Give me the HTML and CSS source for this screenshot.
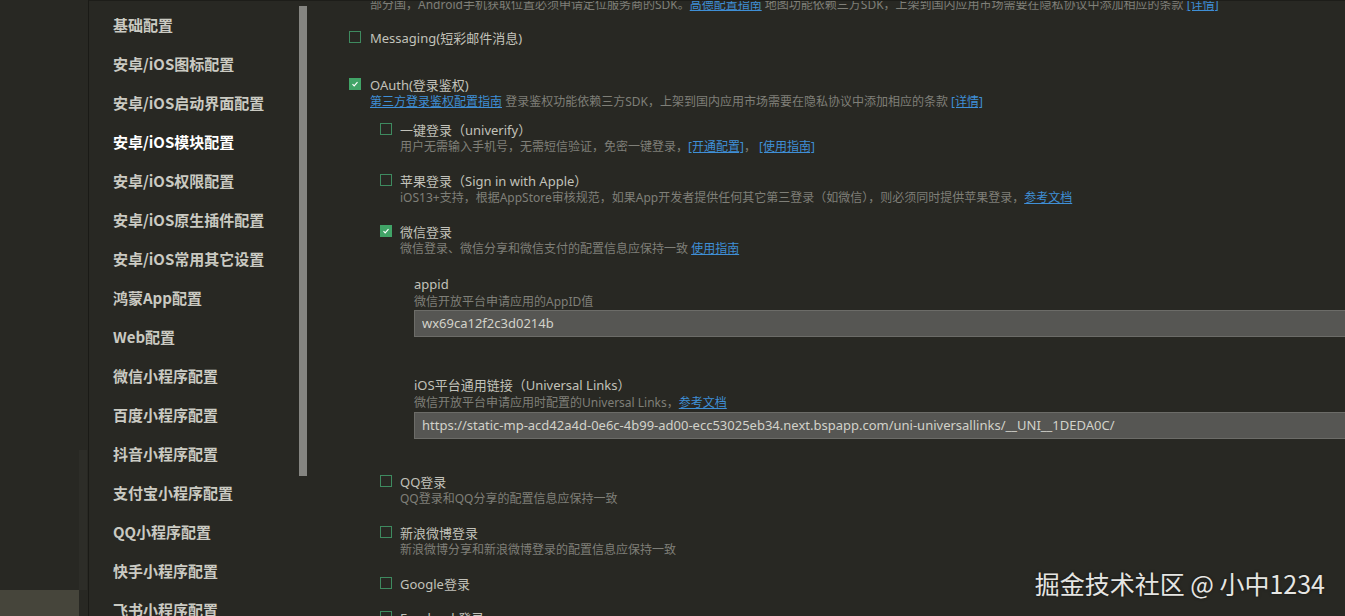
FILE: index.html
```html
<!DOCTYPE html>
<html lang="zh-CN">
<head>
    <meta charset="UTF-8">
    <meta name="viewport" content="width=device-width, initial-scale=1.0">
    <title>manifest.json</title>
    <link rel="stylesheet" href="styles.css">
</head>
<body>
    <div class="app">
        <div class="gutter">
            <div class="gutter-space"></div>
            <div class="gutter-rail"></div>
            <div class="gutter-block"></div>
        </div>

        <div class="sidebar">
            <div class="nav">
                <div class="nav-item">基础配置</div>
                <div class="nav-item">安卓/iOS图标配置</div>
                <div class="nav-item">安卓/iOS启动界面配置</div>
                <div class="nav-item active">安卓/iOS模块配置</div>
                <div class="nav-item">安卓/iOS权限配置</div>
                <div class="nav-item">安卓/iOS原生插件配置</div>
                <div class="nav-item">安卓/iOS常用其它设置</div>
                <div class="nav-item">鸿蒙App配置</div>
                <div class="nav-item">Web配置</div>
                <div class="nav-item">微信小程序配置</div>
                <div class="nav-item">百度小程序配置</div>
                <div class="nav-item">抖音小程序配置</div>
                <div class="nav-item">支付宝小程序配置</div>
                <div class="nav-item">QQ小程序配置</div>
                <div class="nav-item">快手小程序配置</div>
                <div class="nav-item">飞书小程序配置</div>
            </div>
            <div class="scrollbar">
                <div class="thumb"></div>
            </div>
        </div>

        <div class="content">
            <div class="desc lead">部分国，Android手机获取位置必须申请定位服务商的SDK。<a href="#">高德配置指南</a> 地图功能依赖三方SDK，上架到国内应用市场需要在隐私协议中添加相应的条款 <a href="#">[详情]</a></div>

            <div class="opt messaging">
                <div class="opt-label"><span class="check"></span>Messaging(短彩邮件消息)</div>
            </div>

            <div class="opt">
                <div class="opt-label"><span class="check on"><svg viewBox="0 0 12 12"><path d="M3 6.2l2 2 4-4.4"/></svg></span>OAuth(登录鉴权)</div>
                <div class="desc"><a href="#">第三方登录鉴权配置指南</a> 登录鉴权功能依赖三方SDK，上架到国内应用市场需要在隐私协议中添加相应的条款 <a href="#">[详情]</a></div>

                <div class="sub-list">
                    <div class="opt sub">
                        <div class="opt-label"><span class="check"></span>一键登录（univerify）</div>
                        <div class="desc">用户无需输入手机号，无需短信验证，免密一键登录，<a href="#">[开通配置]</a>， <a href="#">[使用指南]</a></div>
                    </div>

                    <div class="opt sub">
                        <div class="opt-label"><span class="check"></span>苹果登录（Sign in with Apple）</div>
                        <div class="desc">iOS13+支持，根据AppStore审核规范，如果App开发者提供任何其它第三登录（如微信），则必须同时提供苹果登录，<a href="#">参考文档</a></div>
                    </div>

                    <div class="opt sub">
                        <div class="opt-label"><span class="check on"><svg viewBox="0 0 12 12"><path d="M3 6.2l2 2 4-4.4"/></svg></span>微信登录</div>
                        <div class="desc">微信登录、微信分享和微信支付的配置信息应保持一致 <a href="#">使用指南</a></div>

                        <div class="fields">
                            <div class="field">
                                <div class="field-label">appid</div>
                                <div class="desc">微信开放平台申请应用的AppID值</div>
                                <input class="field-input" type="text" value="wx69ca12f2c3d0214b">
                            </div>
                            <div class="field">
                                <div class="field-label">iOS平台通用链接（Universal Links）</div>
                                <div class="desc">微信开放平台申请应用时配置的Universal Links，<a href="#">参考文档</a></div>
                                <input class="field-input" type="text" value="https://static-mp-acd42a4d-0e6c-4b99-ad00-ecc53025eb34.next.bspapp.com/uni-universallinks/__UNI__1DEDA0C/">
                            </div>
                        </div>
                    </div>

                    <div class="opt sub">
                        <div class="opt-label"><span class="check"></span>QQ登录</div>
                        <div class="desc">QQ登录和QQ分享的配置信息应保持一致</div>
                    </div>

                    <div class="opt sub">
                        <div class="opt-label"><span class="check"></span>新浪微博登录</div>
                        <div class="desc">新浪微博分享和新浪微博登录的配置信息应保持一致</div>
                    </div>

                    <div class="opt sub">
                        <div class="opt-label"><span class="check"></span>Google登录</div>
                    </div>

                    <div class="opt sub">
                        <div class="opt-label"><span class="check"></span>Facebook登录</div>
                    </div>
                </div>
            </div>
        </div>
    </div>

    <div class="watermark">掘金技术社区 @ 小中1234</div>
</body>
</html>
```

FILE: styles.css
```css
* {
    box-sizing: border-box;
}

body {
    margin: 0;
    padding: 0;
    height: 100vh;
    overflow: hidden;
    background-color: #282823;
    color: #c2c2ba;
    font-family: 'Noto Sans', 'Noto Sans CJK SC', sans-serif;
}

.app {
    display: flex;
    height: 100vh;
}

/* left strip */
.gutter {
    width: 88px;
    flex-shrink: 0;
    display: flex;
    flex-direction: column;
}

.gutter-space {
    flex: 1;
}

.gutter-rail {
    width: 8px;
    height: 140px;
    margin-left: 79px;
    background: #2d2d28;
}

.gutter-block {
    width: 79px;
    height: 26px;
    background: #46453b;
}

/* settings nav */
.sidebar {
    width: 219px;
    flex-shrink: 0;
    display: flex;
    border-left: 1px solid #1a1a16;
    border-top: 1px solid #1d1d19;
}

.nav {
    flex: 1;
    padding: 4px 0 0 24px;
}

.nav-item {
    height: 39px;
    line-height: 39px;
    font-family: 'Noto Sans CJK SC', sans-serif;
    font-size: 15px;
    font-weight: bold;
    color: #cacac2;
    white-space: nowrap;
}

.nav-item.active {
    color: #ffffff;
}

.scrollbar {
    width: 8px;
    padding-top: 5px;
}

.thumb {
    height: 470px;
    background: #858581;
}

/* main panel */
.content {
    flex: 1;
    min-width: 0;
    overflow: hidden;
    padding-left: 42px;
    border-top: 1px solid #1d1d19;
}

.desc {
    font-size: 12px;
    line-height: 17px;
    color: #7f7f78;
    white-space: nowrap;
}

.desc a {
    color: #3f8fd6;
    text-decoration: underline;
}

.lead {
    margin-top: -5px;
    padding-left: 21px;
}

.opt {
    margin-top: 17px;
}

.messaging {
    margin-top: 15.5px;
    margin-bottom: 30px;
}

.messaging + .opt {
    margin-top: 0;
}

.opt-label {
    display: flex;
    align-items: center;
    height: 17px;
    font-size: 13px;
    white-space: nowrap;
}

.check {
    width: 12px;
    height: 12px;
    margin-right: 9px;
    flex-shrink: 0;
    border: 1px solid #3e8a5f;
}

.check.on {
    background: #41a467;
    border-color: #41a467;
}

.check svg {
    display: block;
    width: 10px;
    height: 10px;
    fill: none;
    stroke: #ffffff;
    stroke-width: 1.4;
}

.opt > .desc {
    padding-left: 21px;
}

.sub-list {
    margin-top: 11px;
    margin-left: 31px;
}

.sub-list .opt:first-child {
    margin-top: 0;
}

.sub .check {
    margin-right: 8px;
}

.sub > .desc {
    padding-left: 20px;
}

/* wechat fields */
.fields {
    padding-left: 34px;
    padding-top: 1px;
    padding-bottom: 17px;
}

.field {
    margin-top: 18px;
}

.field + .field {
    margin-top: 40px;
}

.field-label {
    font-size: 13px;
    line-height: 17px;
    white-space: nowrap;
}

.field-input {
    display: block;
    width: 1000px;
    height: 27px;
    margin-top: 0;
    padding: 0 7px;
    border: 1px solid #6c6c68;
    background: #565653;
    color: #d2d2ca;
    font-family: 'Noto Sans', 'Noto Sans CJK SC', sans-serif;
    font-size: 13px;
    outline: none;
}

.field + .field .field-input {
    margin-top: 1px;
}

.watermark {
    position: absolute;
    right: 20px;
    bottom: 17px;
    font-family: 'Noto Sans CJK SC', sans-serif;
    font-size: 25px;
    line-height: 32px;
    color: #e6e6e3;
    text-shadow: 0 0 3px rgba(0, 0, 0, 0.5);
}
```
